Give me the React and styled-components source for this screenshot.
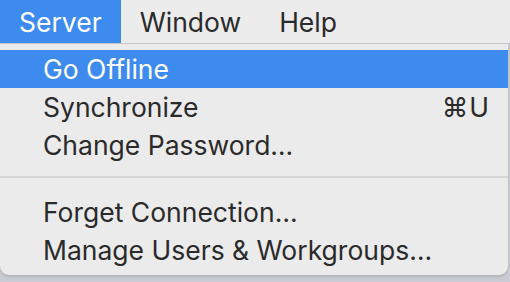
import React from "react";
import styled, { createGlobalStyle } from "styled-components";

const GlobalStyle = createGlobalStyle`
  html, body {
    margin: 0;
    padding: 0;
    background: #c9ccd3;
  }
  body {
    font-family: Inter, "Noto Sans", "Liberation Sans", sans-serif;
    -webkit-font-smoothing: antialiased;
  }
`;

const Screen = styled.div`
  width: 510px;
  height: 282px;
  overflow: hidden;
  background: #c9ccd3;
`;

const MenuBar = styled.ul`
  display: flex;
  margin: 0;
  padding: 0;
  list-style: none;
  height: 43px;
  background: #ececec;
  border-bottom: 1px solid #c6c6c6;
`;

const MenuTitle = styled.li`
  display: flex;
  align-items: center;
  padding: 0 19px;
  font-size: 26.5px;
  color: ${(p) => (p.active ? "#fff" : "#2a2a2a")};
  background: ${(p) => (p.active ? "#3d8bef" : "transparent")};
`;

const Dropdown = styled.ul`
  margin: 0;
  padding: 6px 0 6px;
  list-style: none;
  width: 508px;
  background: #ebebeb;
  border-radius: 0 0 9px 9px;
  box-shadow: 0 2px 3px rgba(0, 0, 0, 0.12);
`;

const Item = styled.li`
  display: flex;
  align-items: center;
  justify-content: space-between;
  height: 38px;
  padding: 0 18px 0 43px;
  font-size: 26.5px;
  color: ${(p) => (p.active ? "#fff" : "#2a2a2a")};
  background: ${(p) => (p.active ? "#3d8bef" : "transparent")};
`;

const Shortcut = styled.span`
  letter-spacing: 1px;
`;

const Separator = styled.li`
  height: 2px;
  margin: 12px 0 15px;
  background: #d7d7d7;
`;

export default function App() {
  return (
    <>
      <GlobalStyle />
      <Screen>
        <MenuBar>
          <MenuTitle active>Server</MenuTitle>
          <MenuTitle>Window</MenuTitle>
          <MenuTitle>Help</MenuTitle>
        </MenuBar>
        <Dropdown>
          <Item active>Go Offline</Item>
          <Item>
            Synchronize
            <Shortcut>⌘U</Shortcut>
          </Item>
          <Item>Change Password…</Item>
          <Separator />
          <Item>Forget Connection…</Item>
          <Item>Manage Users &amp; Workgroups…</Item>
        </Dropdown>
      </Screen>
    </>
  );
}
